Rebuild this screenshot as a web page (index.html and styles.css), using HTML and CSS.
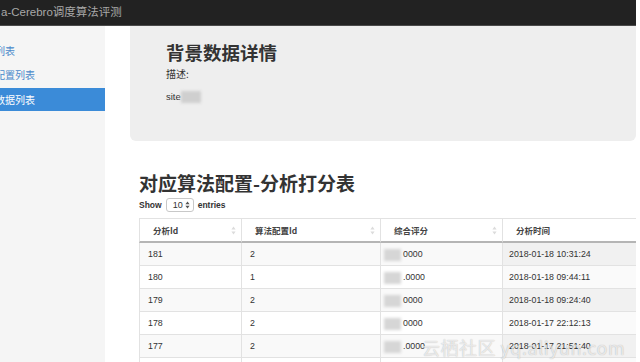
FILE: index.html
```html
<!DOCTYPE html>
<html lang="zh">
<head>
<meta charset="utf-8">
<title>Cerebro调度算法评测</title>
<link rel="stylesheet" href="styles.css">
</head>
<body>
<div class="page">
  <header class="navbar"><span class="brand">a-Cerebro调度算法评测</span></header>
  <div class="layout">
    <aside class="sidebar">
      <a class="nav-item">算法列表</a>
      <a class="nav-item">算法配置列表</a>
      <a class="nav-item active">背景数据列表</a>
    </aside>
    <main class="main">
      <section class="jumbotron">
        <h1 class="jt-title">背景数据详情</h1>
        <p class="jt-desc">描述:</p>
        <p class="jt-site">site<span class="mask-site"></span></p>
      </section>
      <section class="analysis">
        <h2 class="an-title">对应算法配置-分析打分表</h2>
        <div class="length">Show <span class="select">10<svg class="sel-arrow" width="5" height="8" viewBox="0 0 5 8"><path d="M2.5 0.5 L4.6 3.2 H0.4 Z M2.5 7.5 L4.6 4.8 H0.4 Z" fill="#555"/></svg></span> entries</div>
        <table class="grid">
          <colgroup><col class="c1"><col class="c2"><col class="c3"><col class="c4"></colgroup>
          <thead>
            <tr>
              <th>分析Id<svg class="sort" width="5" height="9" viewBox="0 0 5 9"><path d="M2.5 0.5 L4.6 3.5 H0.4 Z M2.5 8.5 L4.6 5.5 H0.4 Z" fill="#dcdcdc"/></svg></th>
              <th>算法配置Id<svg class="sort" width="5" height="9" viewBox="0 0 5 9"><path d="M2.5 0.5 L4.6 3.5 H0.4 Z M2.5 8.5 L4.6 5.5 H0.4 Z" fill="#dcdcdc"/></svg></th>
              <th>综合评分<svg class="sort" width="5" height="9" viewBox="0 0 5 9"><path d="M2.5 0.5 L4.6 3.5 H0.4 Z M2.5 8.5 L4.6 5.5 H0.4 Z" fill="#dcdcdc"/></svg></th>
              <th>分析时间</th>
            </tr>
          </thead>
          <tbody>
            <tr><td>181</td><td>2</td><td><span class="mask"></span>0000</td><td class="sorted">2018-01-18 10:31:24</td></tr>
            <tr><td>180</td><td>1</td><td><span class="mask"></span>.0000</td><td class="sorted">2018-01-18 09:44:11</td></tr>
            <tr><td>179</td><td>2</td><td><span class="mask"></span>0000</td><td class="sorted">2018-01-18 09:24:40</td></tr>
            <tr><td>178</td><td>2</td><td><span class="mask"></span>0000</td><td class="sorted">2018-01-17 22:12:13</td></tr>
            <tr><td>177</td><td>2</td><td><span class="mask"></span>.0000</td><td class="sorted">2018-01-17 21:51:40</td></tr>
            <tr><td>176</td><td>2</td><td><span class="mask"></span>.0000</td><td class="sorted">2018-01-17 21:30:02</td></tr>
          </tbody>
        </table>
      </section>
    </main>
  </div>
  <div class="watermark">云栖社区 yq.aliyun.com</div>
</div>
</body>
</html>
```
FILE: styles.css
```css
html, body {
  margin: 0;
  padding: 0;
  background: #fff;
}
body {
  font-family: "Liberation Sans", "Noto Sans CJK SC", sans-serif;
  color: #333;
}
.page {
  position: relative;
  width: 636px;
  height: 362px;
  overflow: hidden;
  background: #fff;
}
.navbar {
  height: 25px;
  background: #222;
  border-bottom: 1px solid #4a4a4a;
}
.brand {
  display: block;
  padding-left: 1px;
  line-height: 25px;
  font-size: 11.5px;
  color: #a8a8a8;
  white-space: nowrap;
}
.layout {
  display: flex;
  height: 336px;
}
.sidebar {
  width: 105px;
  flex: none;
  background: #f5f5f5;
  padding-top: 12.5px;
  overflow: hidden;
  box-sizing: border-box;
}
.nav-item {
  display: block;
  margin-left: -25px;
  margin-bottom: 1.5px;
  height: 23px;
  line-height: 23px;
  font-size: 10px;
  font-family: "Noto Sans CJK SC", sans-serif;
  color: #4a8acb;
  white-space: nowrap;
}
.nav-item.active {
  background: #3b8bd8;
  color: #fff;
}
.main {
  flex: 1;
  margin-left: 25px;
  min-width: 0;
}
.jumbotron {
  height: 115px;
  background: #eee;
  border-radius: 0 0 6px 6px;
  padding-left: 36px;
  padding-top: 15px;
  box-sizing: border-box;
}
.jt-title {
  margin: 0;
  font-family: "Noto Sans CJK SC", sans-serif;
  font-size: 18.5px;
  line-height: 22px;
  font-weight: bold;
  color: #333;
}
.jt-desc {
  margin: 4px 0 0;
  font-family: "Noto Sans CJK SC", sans-serif;
  font-size: 10px;
  line-height: 14px;
  color: #333;
}
.jt-site {
  margin: 9px 0 0;
  font-size: 9.5px;
  line-height: 14px;
  color: #333;
}
.mask-site {
  display: inline-block;
  width: 20px;
  height: 12px;
  vertical-align: middle;
  background: #cfcfcf;
  filter: blur(1.5px);
}
.analysis {
  padding-left: 9px;
}
.an-title {
  margin: 30px 0 0;
  font-family: "Noto Sans CJK SC", sans-serif;
  font-size: 19px;
  line-height: 24px;
  font-weight: bold;
  color: #333;
  white-space: nowrap;
}
.length {
  margin-top: 3px;
  height: 14px;
  font-size: 8.5px;
  line-height: 14px;
  font-weight: bold;
  color: #333;
  display: flex;
  align-items: center;
  gap: 2px;
}
.select {
  display: inline-flex;
  align-items: center;
  justify-content: space-between;
  box-sizing: border-box;
  width: 28px;
  height: 14px;
  padding: 0 3px 0 6px;
  border: 1px solid #c8c8c8;
  border-radius: 3px;
  background: #fff;
  font-weight: normal;
  font-size: 9px;
  margin: 0 2px;
}
.grid {
  margin-top: 6px;
  border-spacing: 0;
  table-layout: fixed;
  width: 503px;
  font-size: 8.8px;
  color: #333;
}
.c1 { width: 102px; }
.c2 { width: 139px; }
.c3 { width: 122px; }
.c4 { width: 140px; }
.grid th {
  text-align: left;
  font-family: "Noto Sans CJK SC", sans-serif;
  font-weight: bold;
  font-size: 8.5px;
  color: #444;
  line-height: 22px;
  padding: 0 5px 0 13px;
  border-top: 1px solid #e2e2e2;
  border-left: 1px solid #e2e2e2;
  border-bottom: 2px solid #b5b5b5;
  white-space: nowrap;
}
.sort {
  float: right;
  margin-top: 7px;
}
.grid td {
  line-height: 22px;
  padding: 0 8px;
  border-left: 1px solid #e2e2e2;
  border-bottom: 1px solid #e2e2e2;
  white-space: nowrap;
}
.grid tbody tr:nth-child(odd) td {
  background: #f9f9f9;
}
.grid tbody tr td.sorted {
  background: #fafafa;
  padding-left: 6px;
}
.grid tbody tr:nth-child(odd) td.sorted {
  background: #f1f1f1;
}
.mask {
  display: inline-block;
  width: 17px;
  height: 12px;
  margin-left: -5px;
  margin-right: 2px;
  vertical-align: middle;
  background: #d6d6d6;
  filter: blur(1.8px);
}
.watermark {
  position: absolute;
  left: 422px;
  top: 335px;
  font-family: "Noto Sans CJK SC", sans-serif;
  font-size: 18px;
  line-height: 24px;
  letter-spacing: 0.5px;
  color: rgba(255, 255, 255, 0.7);
  text-shadow: 0 0 1px rgba(0, 0, 0, 0.3);
  white-space: nowrap;
}
```
